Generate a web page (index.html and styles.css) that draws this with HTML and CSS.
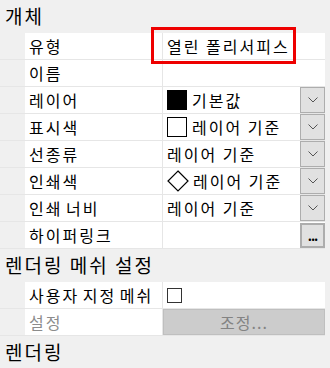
FILE: index.html
```html
<!DOCTYPE html>
<html>
<head>
  <meta charset="utf-8">
  <title>속성</title>
  <link rel="stylesheet" href="styles.css">
</head>
<body>
  <div class="panel">
    <div class="section-title">개체</div>
    <div class="rows">
      <div class="row top">
        <div class="gutter"></div>
        <div class="label">유형</div>
        <div class="value">
          <span class="text">열린 폴리서피스</span>
          <div class="highlight"></div>
        </div>
      </div>
      <div class="row">
        <div class="gutter"></div>
        <div class="label">이름</div>
        <div class="value"></div>
      </div>
      <div class="row">
        <div class="gutter"></div>
        <div class="label">레이어</div>
        <div class="value">
          <span class="swatch black"></span>
          <span class="text">기본값</span>
          <div class="drop"><svg width="10" height="6" viewBox="0 0 10 6"><polyline points="0.5,0.5 5,5 9.5,0.5" fill="none" stroke="#555" stroke-width="1"/></svg></div>
        </div>
      </div>
      <div class="row">
        <div class="gutter"></div>
        <div class="label">표시색</div>
        <div class="value">
          <span class="swatch white"></span>
          <span class="text">레이어 기준</span>
          <div class="drop"><svg width="10" height="6" viewBox="0 0 10 6"><polyline points="0.5,0.5 5,5 9.5,0.5" fill="none" stroke="#555" stroke-width="1"/></svg></div>
        </div>
      </div>
      <div class="row">
        <div class="gutter"></div>
        <div class="label">선종류</div>
        <div class="value">
          <span class="text">레이어 기준</span>
          <div class="drop"><svg width="10" height="6" viewBox="0 0 10 6"><polyline points="0.5,0.5 5,5 9.5,0.5" fill="none" stroke="#555" stroke-width="1"/></svg></div>
        </div>
      </div>
      <div class="row">
        <div class="gutter"></div>
        <div class="label">인쇄색</div>
        <div class="value">
          <svg class="diamond" width="22" height="22" viewBox="0 0 22 22"><polygon points="11,1 21,11 11,21 1,11" fill="#fff" stroke="#000" stroke-width="1.2"/></svg>
          <span class="text">레이어 기준</span>
          <div class="drop"><svg width="10" height="6" viewBox="0 0 10 6"><polyline points="0.5,0.5 5,5 9.5,0.5" fill="none" stroke="#555" stroke-width="1"/></svg></div>
        </div>
      </div>
      <div class="row">
        <div class="gutter"></div>
        <div class="label">인쇄 너비</div>
        <div class="value">
          <span class="text">레이어 기준</span>
          <div class="drop"><svg width="10" height="6" viewBox="0 0 10 6"><polyline points="0.5,0.5 5,5 9.5,0.5" fill="none" stroke="#555" stroke-width="1"/></svg></div>
        </div>
      </div>
      <div class="row">
        <div class="gutter"></div>
        <div class="label">하이퍼링크</div>
        <div class="value">
          <div class="more">...</div>
        </div>
      </div>
    </div>

    <div class="section-title">렌더링 메쉬 설정</div>
    <div class="rows">
      <div class="row">
        <div class="gutter"></div>
        <div class="label">사용자 지정 메쉬</div>
        <div class="value">
          <span class="checkbox"></span>
        </div>
      </div>
      <div class="row">
        <div class="gutter"></div>
        <div class="label disabled">설정</div>
        <div class="value">
          <div class="button-disabled">조정...</div>
        </div>
      </div>
    </div>

    <div class="section-title">렌더링</div>
  </div>
</body>
</html>
```

FILE: styles.css
```css
/* 기본 설정 */
html, body {
  margin: 0;
  padding: 0;
  background: #f0f0f0;
  font-family: "Noto Sans CJK KR", "Noto Sans", sans-serif;
  color: #000;
}

.panel {
  width: 330px;
}

.section-title {
  height: 33px;
  line-height: 32px;
  padding-left: 5px;
  font-size: 19px;
  letter-spacing: 2px;
}

.row {
  display: flex;
  height: 26px;
  border-bottom: 1px solid #e6e6e6;
  margin-right: 5px;
}

/* 강조 상자가 다음 줄 위에 보이도록 */
.row.top {
  position: relative;
  z-index: 2;
}

.gutter {
  width: 25px;
  background: #f0f0f0;
}

.label {
  width: 133px;
  padding-left: 4px;
  background: #fff;
  border-right: 1px solid #e6e6e6;
  font-size: 16px;
  line-height: 26px;
  letter-spacing: 2px;
  word-spacing: -2px;
  white-space: nowrap;
}

.label.disabled {
  color: #8c8c8c;
}

.value {
  flex: 1;
  display: flex;
  align-items: center;
  position: relative;
  background: #fff;
  padding-left: 4px;
  font-size: 16px;
  letter-spacing: 2px;
}

.text {
  white-space: nowrap;
}

.swatch {
  width: 20px;
  height: 20px;
  margin-right: 5px;
  box-sizing: border-box;
  border: 1px solid #000;
}

.swatch.black {
  background: #000;
}

.swatch.white {
  background: #fff;
}

.diamond {
  margin-right: 4px;
}

/* 드롭다운 버튼 */
.drop {
  margin-left: auto;
  width: 25px;
  height: 26px;
  box-sizing: border-box;
  background: #e1e1e1;
  border: 1px solid #adadad;
  display: flex;
  align-items: center;
  justify-content: center;
}

.more {
  margin-left: auto;
  width: 25px;
  height: 25px;
  box-sizing: border-box;
  background: #e1e1e1;
  border: 2px solid #adadad;
  font-size: 13px;
  font-weight: bold;
  line-height: 22px;
  text-align: center;
  letter-spacing: -1px;
}

.checkbox {
  width: 15px;
  height: 15px;
  box-sizing: border-box;
  border: 1px solid #333;
  background: #fff;
}

.button-disabled {
  margin-left: -4px;
  flex: 1;
  height: 26px;
  box-sizing: border-box;
  background: #cccccc;
  border: 1px solid #bfbfbf;
  color: #838383;
  text-align: center;
  line-height: 24px;
  font-size: 16px;
  letter-spacing: 1px;
}

/* 빨간 강조 상자 */
.highlight {
  position: absolute;
  left: -12px;
  top: -6px;
  width: 145px;
  height: 37px;
  box-sizing: border-box;
  border: 3px solid #ee0000;
}
```
